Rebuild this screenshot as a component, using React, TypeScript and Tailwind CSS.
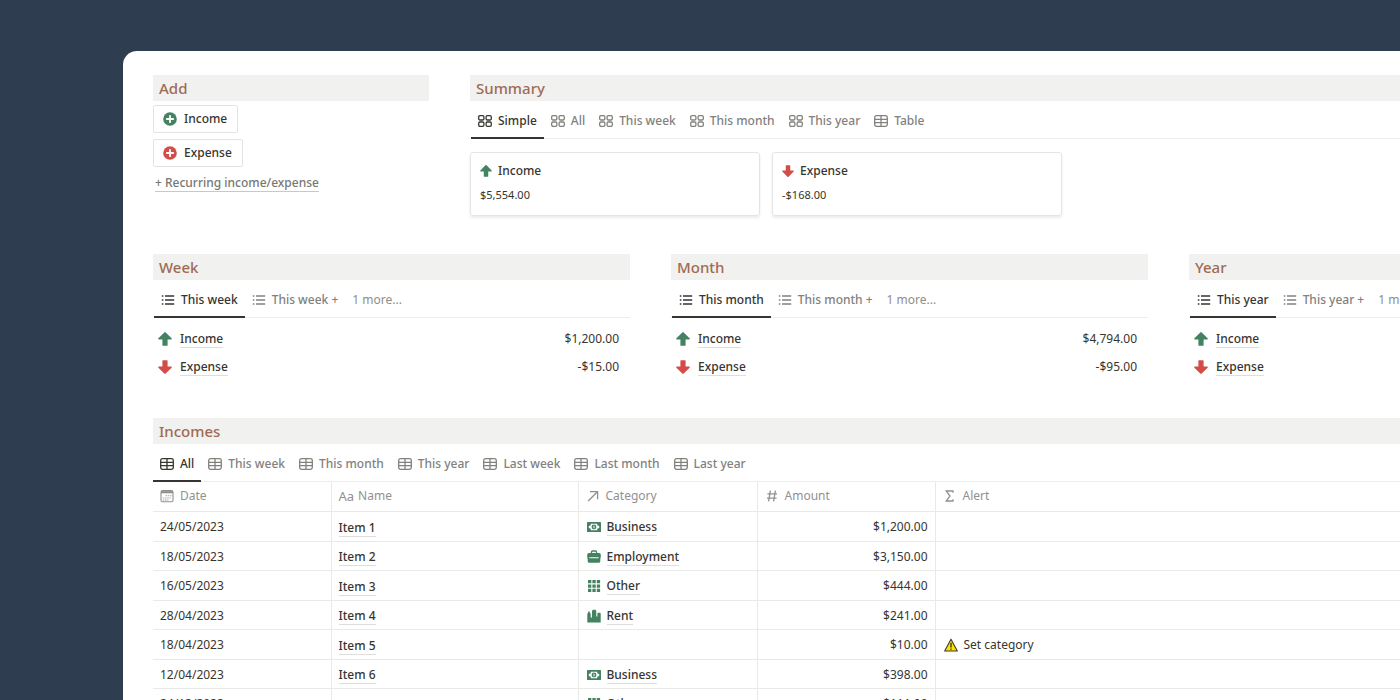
import type { ReactNode } from 'react';

type IconProps = { className?: string };

const GalleryIcon = ({ className = '' }: IconProps) => (
  <svg viewBox="0 0 14 12" className={`w-3.5 h-3 shrink-0 ${className}`} fill="none" stroke="currentColor" strokeWidth="1.3">
    <rect x="0.7" y="0.7" width="5.2" height="4.3" rx="1.2" />
    <rect x="8.1" y="0.7" width="5.2" height="4.3" rx="1.2" />
    <rect x="0.7" y="7" width="5.2" height="4.3" rx="1.2" />
    <rect x="8.1" y="7" width="5.2" height="4.3" rx="1.2" />
  </svg>
);

const TableIcon = ({ className = '' }: IconProps) => (
  <svg viewBox="0 0 14 12" className={`w-3.5 h-3 shrink-0 ${className}`} fill="none" stroke="currentColor" strokeWidth="1.3">
    <rect x="0.7" y="0.7" width="12.6" height="10.6" rx="1.8" />
    <path d="M0.7 4.3H13.3M0.7 7.7H13.3M7 0.7V11.3" />
  </svg>
);

const ListIcon = ({ className = '' }: IconProps) => (
  <svg viewBox="0 0 14 12" className={`w-3.5 h-3 shrink-0 ${className}`} fill="none" stroke="currentColor" strokeWidth="1.3">
    <path d="M4 2H13.2M4 6H13.2M4 10H13.2" />
    <path d="M0.8 2H2.4M0.8 6H2.4M0.8 10H2.4" strokeWidth="1.6" />
  </svg>
);

const ArrowUp = ({ className = '' }: IconProps) => (
  <svg viewBox="0 0 14 14" className={`shrink-0 text-[#448361] ${className}`} fill="currentColor">
    <path d="M6.3 0.4a1 1 0 0 1 1.4 0L13.6 6.3c.5.5.2 1.2-.5 1.2H9.6V13.2a.6.6 0 0 1-.6.6H5a.6.6 0 0 1-.6-.6V7.5H.9c-.7 0-1-.7-.5-1.2Z" />
  </svg>
);

const ArrowDown = ({ className = '' }: IconProps) => (
  <svg viewBox="0 0 14 14" className={`shrink-0 text-[#d44c47] ${className}`} fill="currentColor">
    <path d="M6.3 13.6a1 1 0 0 0 1.4 0L13.6 7.7c.5-.5.2-1.2-.5-1.2H9.6V.8A.6.6 0 0 0 9 .2H5a.6.6 0 0 0-.6.6V6.5H.9c-.7 0-1 .7-.5 1.2Z" />
  </svg>
);

const PlusCircle = ({ className = '' }: IconProps) => (
  <svg viewBox="0 0 14 14" className={`w-3.5 h-3.5 shrink-0 ${className}`}>
    <circle cx="7" cy="7" r="6.8" fill="currentColor" />
    <path d="M7 3.8V10.2M3.8 7H10.2" stroke="white" strokeWidth="1.8" strokeLinecap="round" />
  </svg>
);

const MoneyIcon = () => (
  <svg viewBox="0 0 14 10" className="w-3.5 h-2.5 shrink-0 text-[#448361]">
    <rect width="14" height="10" rx="0.6" fill="currentColor" />
    <path d="M4 1.8H10A2.2 2.2 0 0 0 12.2 4V6A2.2 2.2 0 0 0 10 8.2H4A2.2 2.2 0 0 0 1.8 6V4A2.2 2.2 0 0 0 4 1.8Z" fill="white" />
    <circle cx="7" cy="5" r="2.4" fill="currentColor" />
    <path d="M7 3.7V6.3" stroke="white" strokeWidth="1" />
  </svg>
);

const BriefcaseIcon = () => (
  <svg viewBox="0 0 14 13" className="w-3.5 h-[13px] shrink-0 text-[#448361]">
    <path d="M4.5 3.5V2A1 1 0 0 1 5.5 1H8.5A1 1 0 0 1 9.5 2V3.5" fill="none" stroke="currentColor" strokeWidth="1.3" />
    <path d="M2 3H12A1.8 1.8 0 0 1 13.8 4.8V7.2H.2V4.8A1.8 1.8 0 0 1 2 3ZM.7 8.2H13.3V11.2A1.6 1.6 0 0 1 11.7 12.8H2.3A1.6 1.6 0 0 1 .7 11.2Z" fill="currentColor" />
    <path d="M.5 6.5H2.4V9H.7ZM11.6 6.5H13.5L13.3 9H11.6Z" fill="currentColor" />
  </svg>
);

const GridIcon = () => (
  <svg viewBox="0 0 14 14" className="w-3.5 h-3.5 shrink-0 text-[#448361]" fill="currentColor">
    <path d="M1 1h3.3v3.3H1zM5.4 1h3.3v3.3H5.4zM9.8 1h3.3v3.3H9.8zM1 5.4h3.3v3.3H1zM5.4 5.4h3.3v3.3H5.4zM9.8 5.4h3.3v3.3H9.8zM1 9.8h3.3v3.3H1zM5.4 9.8h3.3v3.3H5.4zM9.8 9.8h3.3v3.3H9.8z" />
  </svg>
);

const CityIcon = () => (
  <svg viewBox="0 0 14 14" className="w-3.5 h-3.5 shrink-0 text-[#448361]" fill="currentColor">
    <path d="M.3 13.5V5L2 1.8 3.7 5V8.5H5V1.8L6 .8H8.3L9.3 1.8V7.5H10.4V4.4L11 3.8H13.1L13.7 4.4V13.5Z" />
  </svg>
);

const CalendarIcon = () => (
  <svg viewBox="0 0 14 14" className="w-3.5 h-3.5 shrink-0" fill="none" stroke="currentColor">
    <rect x="1" y="1.6" width="12" height="11.2" rx="1.6" strokeWidth="1.1" />
    <path d="M1 3.2H13" strokeWidth="2.2" />
    <path d="M5.5 6.6H11.4M2.8 8.8H11.4M2.8 11H8.6" strokeWidth="1.3" strokeDasharray="1.5 0.7" opacity="0.6" />
  </svg>
);

const RelationIcon = () => (
  <svg viewBox="0 0 14 14" className="w-3.5 h-3.5 shrink-0" fill="none" stroke="currentColor" strokeWidth="1.3">
    <path d="M2.2 12L11.4 2.8M4 2.6H11.6V10.2" />
  </svg>
);

const NumberIcon = () => (
  <svg viewBox="0 0 14 14" className="w-3.5 h-3.5 shrink-0" fill="none" stroke="currentColor" strokeWidth="1.3">
    <path d="M5.4 1.6L3.6 12.4M10.4 1.6L8.6 12.4M2.4 4.8H12M2 9.2H11.6" />
  </svg>
);

const SumIcon = () => (
  <svg viewBox="0 0 14 14" className="w-3.5 h-3.5 shrink-0" fill="none" stroke="currentColor" strokeWidth="1.3">
    <path d="M10 3.8V2H3.2L7 7L3.2 12H10V10.2" />
  </svg>
);

const WarningIcon = () => (
  <svg viewBox="0 0 14 14" className="w-3.5 h-3.5 shrink-0">
    <path d="M7 1.2L13.3 13H.7Z" fill="#ffe000" stroke="#3a3a3a" strokeWidth="1.1" strokeLinejoin="round" />
    <path d="M7 4.8V9.4M7 10.4V11.8" stroke="#222" strokeWidth="1.2" />
  </svg>
);

const Heading = ({ children }: { children: ReactNode }) => (
  <h2 className="h-[26px] bg-[#f1f1ef] px-1.5 text-[15px] leading-[26px] font-medium text-[#9f6b53]">{children}</h2>
);

type Tab = { label: string; icon?: (props: IconProps) => ReactNode };

const Tabs = ({ tabs, inset = false }: { tabs: Tab[]; inset?: boolean }) => (
  <div role="tablist" className={`flex h-[38px] border-b border-[#ededec] text-xs whitespace-nowrap ${inset ? 'pl-px' : ''}`}>
    {tabs.map(({ label, icon: Icon }, i) => (
      <button
        key={label}
        role="tab"
        aria-selected={i === 0}
        className={`flex h-[38px] items-center gap-1.5 border-b-2 px-[7px] pt-1 ${
          i === 0 ? 'border-[#37352f] font-medium text-[#37352f]' : Icon ? 'border-transparent font-medium text-[#82817d]' : 'border-transparent text-[#8f8e8b]'
        }`}
      >
        {Icon && <Icon />}
        {label}
      </button>
    ))}
  </div>
);

const summaryTabs: Tab[] = [
  { label: 'Simple', icon: GalleryIcon },
  { label: 'All', icon: GalleryIcon },
  { label: 'This week', icon: GalleryIcon },
  { label: 'This month', icon: GalleryIcon },
  { label: 'This year', icon: GalleryIcon },
  { label: 'Table', icon: TableIcon },
];

const incomeTabs: Tab[] = ['All', 'This week', 'This month', 'This year', 'Last week', 'Last month', 'Last year'].map((label) => ({
  label,
  icon: TableIcon,
}));

const periods = [
  { title: 'Week', tab: 'This week', income: '$1,200.00', expense: '-$15.00' },
  { title: 'Month', tab: 'This month', income: '$4,794.00', expense: '-$95.00' },
  { title: 'Year', tab: 'This year', income: '$5,554.00', expense: '-$168.00' },
];

const categoryIcons: Record<string, () => ReactNode> = {
  Business: MoneyIcon,
  Employment: BriefcaseIcon,
  Other: GridIcon,
  Rent: CityIcon,
};

const incomes = [
  { date: '24/05/2023', name: 'Item 1', category: 'Business', amount: '$1,200.00' },
  { date: '18/05/2023', name: 'Item 2', category: 'Employment', amount: '$3,150.00' },
  { date: '16/05/2023', name: 'Item 3', category: 'Other', amount: '$444.00' },
  { date: '28/04/2023', name: 'Item 4', category: 'Rent', amount: '$241.00' },
  { date: '18/04/2023', name: 'Item 5', category: '', amount: '$10.00', alert: 'Set category' },
  { date: '12/04/2023', name: 'Item 6', category: 'Business', amount: '$398.00' },
  { date: '24/12/2022', name: 'Item 7', category: 'Other', amount: '$111.00' },
];

const PageLink = ({ children }: { children: ReactNode }) => (
  <a href="#" className="border-b border-[#dededc] leading-[17px] font-medium">
    {children}
  </a>
);

const AddSection = () => (
  <section className="w-[276px] shrink-0">
    <Heading>Add</Heading>
    <div className="mt-1 flex flex-col items-start gap-1.5 text-xs font-medium">
      <button className="flex h-7 items-center gap-[7px] rounded-xs border border-[#e3e3e1] pr-2.5 pl-[9px]">
        <PlusCircle className="text-[#448361]" />
        Income
      </button>
      <button className="flex h-7 items-center gap-[7px] rounded-xs border border-[#e3e3e1] pr-2.5 pl-[9px]">
        <PlusCircle className="text-[#d44c47]" />
        Expense
      </button>
      <a href="#" className="mt-0.5 ml-0.5 border-b border-[#c9c8c6] leading-4 text-[#787774]">
        + Recurring income/expense
      </a>
    </div>
  </section>
);

const SummaryCard = ({ icon, title, amount }: { icon: ReactNode; title: string; amount: string }) => (
  <div className="h-16 w-[290px] rounded-[3px] border border-[#e4e4e2] px-[9px] pt-2 shadow-[0_2px_3px_rgba(15,15,15,0.08)]">
    <div className="flex h-5 items-center gap-1.5 text-xs font-medium">
      {icon}
      {title}
    </div>
    <p className="mt-1 text-[11px] leading-5">{amount}</p>
  </div>
);

const Summary = () => (
  <section className="min-w-0 flex-1">
    <Heading>Summary</Heading>
    <Tabs tabs={summaryTabs} inset />
    <div className="mt-[13px] flex gap-3">
      <SummaryCard icon={<ArrowUp className="w-3 h-3" />} title="Income" amount="$5,554.00" />
      <SummaryCard icon={<ArrowDown className="w-3 h-3" />} title="Expense" amount="-$168.00" />
    </div>
  </section>
);

const PeriodRow = ({ icon, name, amount }: { icon: ReactNode; name: string; amount: string }) => (
  <li className="flex h-7 items-center gap-2 pr-[11px] pl-[5px]">
    {icon}
    <PageLink>{name}</PageLink>
    <span className="ml-auto">{amount}</span>
  </li>
);

const Incomes = () => (
  <section className="mt-[37px]">
    <Heading>Incomes</Heading>
    <Tabs tabs={incomeTabs} />
    <table className="w-full table-fixed border-collapse text-left text-xs">
      <thead>
        <tr className="h-[29px] border-b border-[#e9e9e7] text-[#91918e] [&>th]:px-[7px] [&>th]:font-normal">
          <th className="w-[178px]"><div className="flex items-center gap-1.5"><CalendarIcon />Date</div></th>
          <th className="w-[247px] border-l border-[#e9e9e7]"><div className="flex items-center gap-1"><span className="text-[13px]">Aa</span>Name</div></th>
          <th className="w-[179px] border-l border-[#e9e9e7]"><div className="flex items-center gap-1.5"><RelationIcon />Category</div></th>
          <th className="w-[178px] border-l border-[#e9e9e7]"><div className="flex items-center gap-1.5"><NumberIcon />Amount</div></th>
          <th className="border-l border-[#e9e9e7]"><div className="flex items-center gap-1.5"><SumIcon />Alert</div></th>
        </tr>
      </thead>
      <tbody>
        {incomes.map((row) => {
          const CategoryIcon = categoryIcons[row.category];
          return (
            <tr key={row.name} className="h-[29px] border-b border-[#e9e9e7] odd:h-[30px] [&>td]:px-[7px] [&>td]:pt-0.5">
              <td>{row.date}</td>
              <td className="border-l border-[#e9e9e7]"><PageLink>{row.name}</PageLink></td>
              <td className="border-l border-[#e9e9e7]">
                {CategoryIcon && (
                  <div className="flex items-center gap-1.5 pl-px">
                    <CategoryIcon />
                    <PageLink>{row.category}</PageLink>
                  </div>
                )}
              </td>
              <td className="border-l border-[#e9e9e7] text-right">{row.amount}</td>
              <td className="border-l border-[#e9e9e7]">
                {row.alert && <div className="flex items-center gap-1.5 pl-px"><WarningIcon />{row.alert}</div>}
              </td>
            </tr>
          );
        })}
      </tbody>
    </table>
  </section>
);

export default function App() {
  return (
    <div className="h-screen overflow-hidden bg-[#2e3e50] pt-[51px] pl-[123px] font-['Noto_Sans','Open_Sans',sans-serif] text-[#37352f]">
      <main className="h-full overflow-hidden rounded-tl-[14px] bg-white pt-6 pl-[30px]">
        <div className="w-[121%] min-w-[1513px]">
          <div className="flex gap-[41px]">
            <AddSection />
            <Summary />
          </div>
          <div className="mt-[38px] grid grid-cols-3 gap-[41px]">
            {periods.map(({ title, tab, income, expense }) => (
              <section key={title}>
                <Heading>{title}</Heading>
                <Tabs inset tabs={[{ label: tab, icon: ListIcon }, { label: `${tab} +`, icon: ListIcon }, { label: '1 more...' }]} />
                <ul className="mt-[7px] text-xs">
                  <PeriodRow icon={<ArrowUp className="w-3.5 h-3.5" />} name="Income" amount={income} />
                  <PeriodRow icon={<ArrowDown className="w-3.5 h-3.5" />} name="Expense" amount={expense} />
                </ul>
              </section>
            ))}
          </div>
          <Incomes />
        </div>
      </main>
    </div>
  );
}
